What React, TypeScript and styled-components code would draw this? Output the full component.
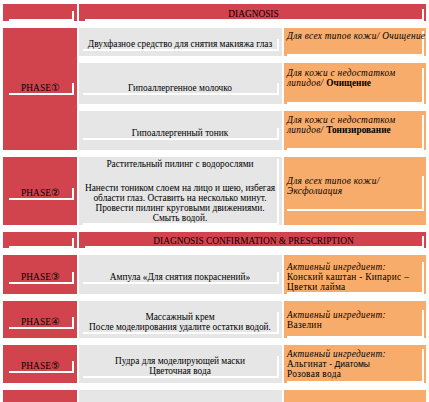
import { FC } from 'react';
import styled, { createGlobalStyle } from 'styled-components';

const GlobalStyle = createGlobalStyle`
  html, body {
    margin: 0;
    background: #ffffff;
    overflow: hidden;
  }
`;

const RED = '#d1434d';
const GRAY = '#e6e6e6';
const ORANGE = '#f8ac6b';

const Phase: FC<{ n: string }> = ({ n }) => <>PHASE<Digit>{ n }</Digit></>;

const App: FC = () => (
  <>
    <GlobalStyle />
    <Sheet>
      <HeadCell><Para $empty /></HeadCell>
      <HeadCell $wide><Para>DIAGNOSIS</Para></HeadCell>

      <PhaseCell $span={ 3 }><Para><Phase n="①" /></Para></PhaseCell>
      <DescCell><Para>Двухфазное средство для снятия макияжа глаз</Para></DescCell>
      <NoteCell $pt={ 3 }><Para $left><Em>Для всех типов кожи/ Очищение</Em></Para></NoteCell>

      <DescCell $low><Para>Гипоаллергенное молочко</Para></DescCell>
      <NoteCell $pt={ 5 }>
        <Para $left><Em>Для кожи с недостатком<br />липидов/ </Em><b>Очищение</b></Para>
      </NoteCell>

      <DescCell><Para>Гипоаллергенный тоник</Para></DescCell>
      <NoteCell $pt={ 4 }>
        <Para $left><Em>Для кожи с недостатком<br />липидов/ </Em><b>Тонизирование</b></Para>
      </NoteCell>

      <PhaseCell><Para><Phase n="②" /></Para></PhaseCell>
      <DescCell $tight>
        <Para>
          Растительный пилинг с водорослями
          <Gap />
          Нанести тоником слоем на лицо и шею, избегая области глаз. Оставить на несколько минут.
          Провести пилинг круговыми движениями. Смыть водой.
        </Para>
      </DescCell>
      <NoteCell $pt={ 19 } $inset>
        <Para $left><Em>Для всех типов кожи/<br />Эксфолиация</Em></Para>
      </NoteCell>

      <HeadCell><Para $empty /></HeadCell>
      <HeadCell $wide><Para>DIAGNOSIS CONFIRMATION &amp; PRESCRIPTION</Para></HeadCell>

      <PhaseCell><Para><Phase n="③" /></Para></PhaseCell>
      <DescCell><Para>Ампула «Для снятия покраснений»</Para></DescCell>
      <NoteCell $pt={ 7 }>
        <Para $left><Em>Активный ингредиент:</Em><br />Конский каштан - Кипарис –<br />Цветки лайма</Para>
      </NoteCell>

      <PhaseCell><Para><Phase n="④" /></Para></PhaseCell>
      <DescCell><Para>Массажный крем<br />После моделирования удалите остатки водой.</Para></DescCell>
      <NoteCell $pt={ 9 }>
        <Para $left><Em>Активный ингредиент:</Em><br />Вазелин</Para>
      </NoteCell>

      <PhaseCell><Para><Phase n="⑤" /></Para></PhaseCell>
      <DescCell><Para>Пудра для моделирующей маски<br />Цветочная вода</Para></DescCell>
      <NoteCell $pt={ 4 }>
        <Para $left><Em>Активный ингредиент:</Em><br />Альгинат<Sans> - Диатомы</Sans><br />Розовая вода</Para>
      </NoteCell>

      <PhaseCell><Para $empty /></PhaseCell>
      <DescCell><Para $empty /></DescCell>
      <NoteCell $pt={ 16 }><Para $empty /></NoteCell>
    </Sheet>
  </>
);

const Sheet = styled.div`
  display: grid;
  grid-template-columns: 74px 203px 142px;
  grid-template-rows: 17px 28px 41px 39px 68px 16px 39px 37px 38px 40px;
  column-gap: 2px;
  row-gap: 7px;
  padding: 4px 0 0 3px;
  font-family: "Liberation Serif", "Times New Roman", serif;
  font-size: 9.33px;
  line-height: 10px;
  color: #000000;
`;

interface ParaProps {
  $left?: boolean;
  $empty?: boolean;
}

const Para = styled.p<ParaProps>`
  flex: 1;
  margin: 0;
  min-height: ${ props => props.$empty ? '8px' : 'auto' };
  border-right: 2px solid #ffffff;
  border-bottom: 2px solid #ffffff;
  text-align: ${ props => props.$left ? 'left' : 'center' };
`;

const Digit = styled.span`
  font-family: "DejaVu Sans", sans-serif;
  font-size: 10px;
  letter-spacing: 0;
`;

const Em = styled.i`
  font-style: italic;
  letter-spacing: 0.3px;
  white-space: nowrap;
`;

const Sans = styled.span`
  font-family: "Liberation Sans", Arial, sans-serif;
  font-size: 8.5px;
  letter-spacing: 0;
`;

const Gap = styled.span`
  display: block;
  height: 14px;
`;

interface HeadCellProps {
  $wide?: boolean;
}

const HeadCell = styled.div<HeadCellProps>`
  display: flex;
  align-items: flex-end;
  background-color: ${ RED };
  padding: 0 ${ props => props.$wide ? '2px' : '3px' } 0 6px;
  grid-column: ${ props => props.$wide ? 'span 2' : 'auto' };
`;

interface PhaseCellProps {
  $span?: number;
}

const PhaseCell = styled.div<PhaseCellProps>`
  display: flex;
  align-items: center;
  background-color: ${ RED };
  padding: ${ props => props.$span ? '0' : '6px' } 3px 0 6px;
  grid-row: ${ props => props.$span ? `span ${ props.$span }` : 'auto' };
  letter-spacing: 0.1px;
`;

interface DescCellProps {
  $tight?: boolean;
  $low?: boolean;
}

const DescCell = styled.div<DescCellProps>`
  display: flex;
  align-items: ${ props => props.$tight ? 'flex-end' : 'center' };
  background-color: ${ GRAY };
  padding: ${ props => props.$tight ? '3px' : props.$low ? '10px' : '6px' } 3px 0 4px;
`;

interface NoteCellProps {
  $pt: number;
  $inset?: boolean;
}

const NoteCell = styled.div<NoteCellProps>`
  display: flex;
  flex-direction: column;
  background-color: ${ ORANGE };
  padding: ${ props => props.$pt }px 2px ${ props => props.$inset ? '14px' : '0' } 3px;
  letter-spacing: 0.3px;

  b {
    letter-spacing: 0;
  }
`;

export default App;
